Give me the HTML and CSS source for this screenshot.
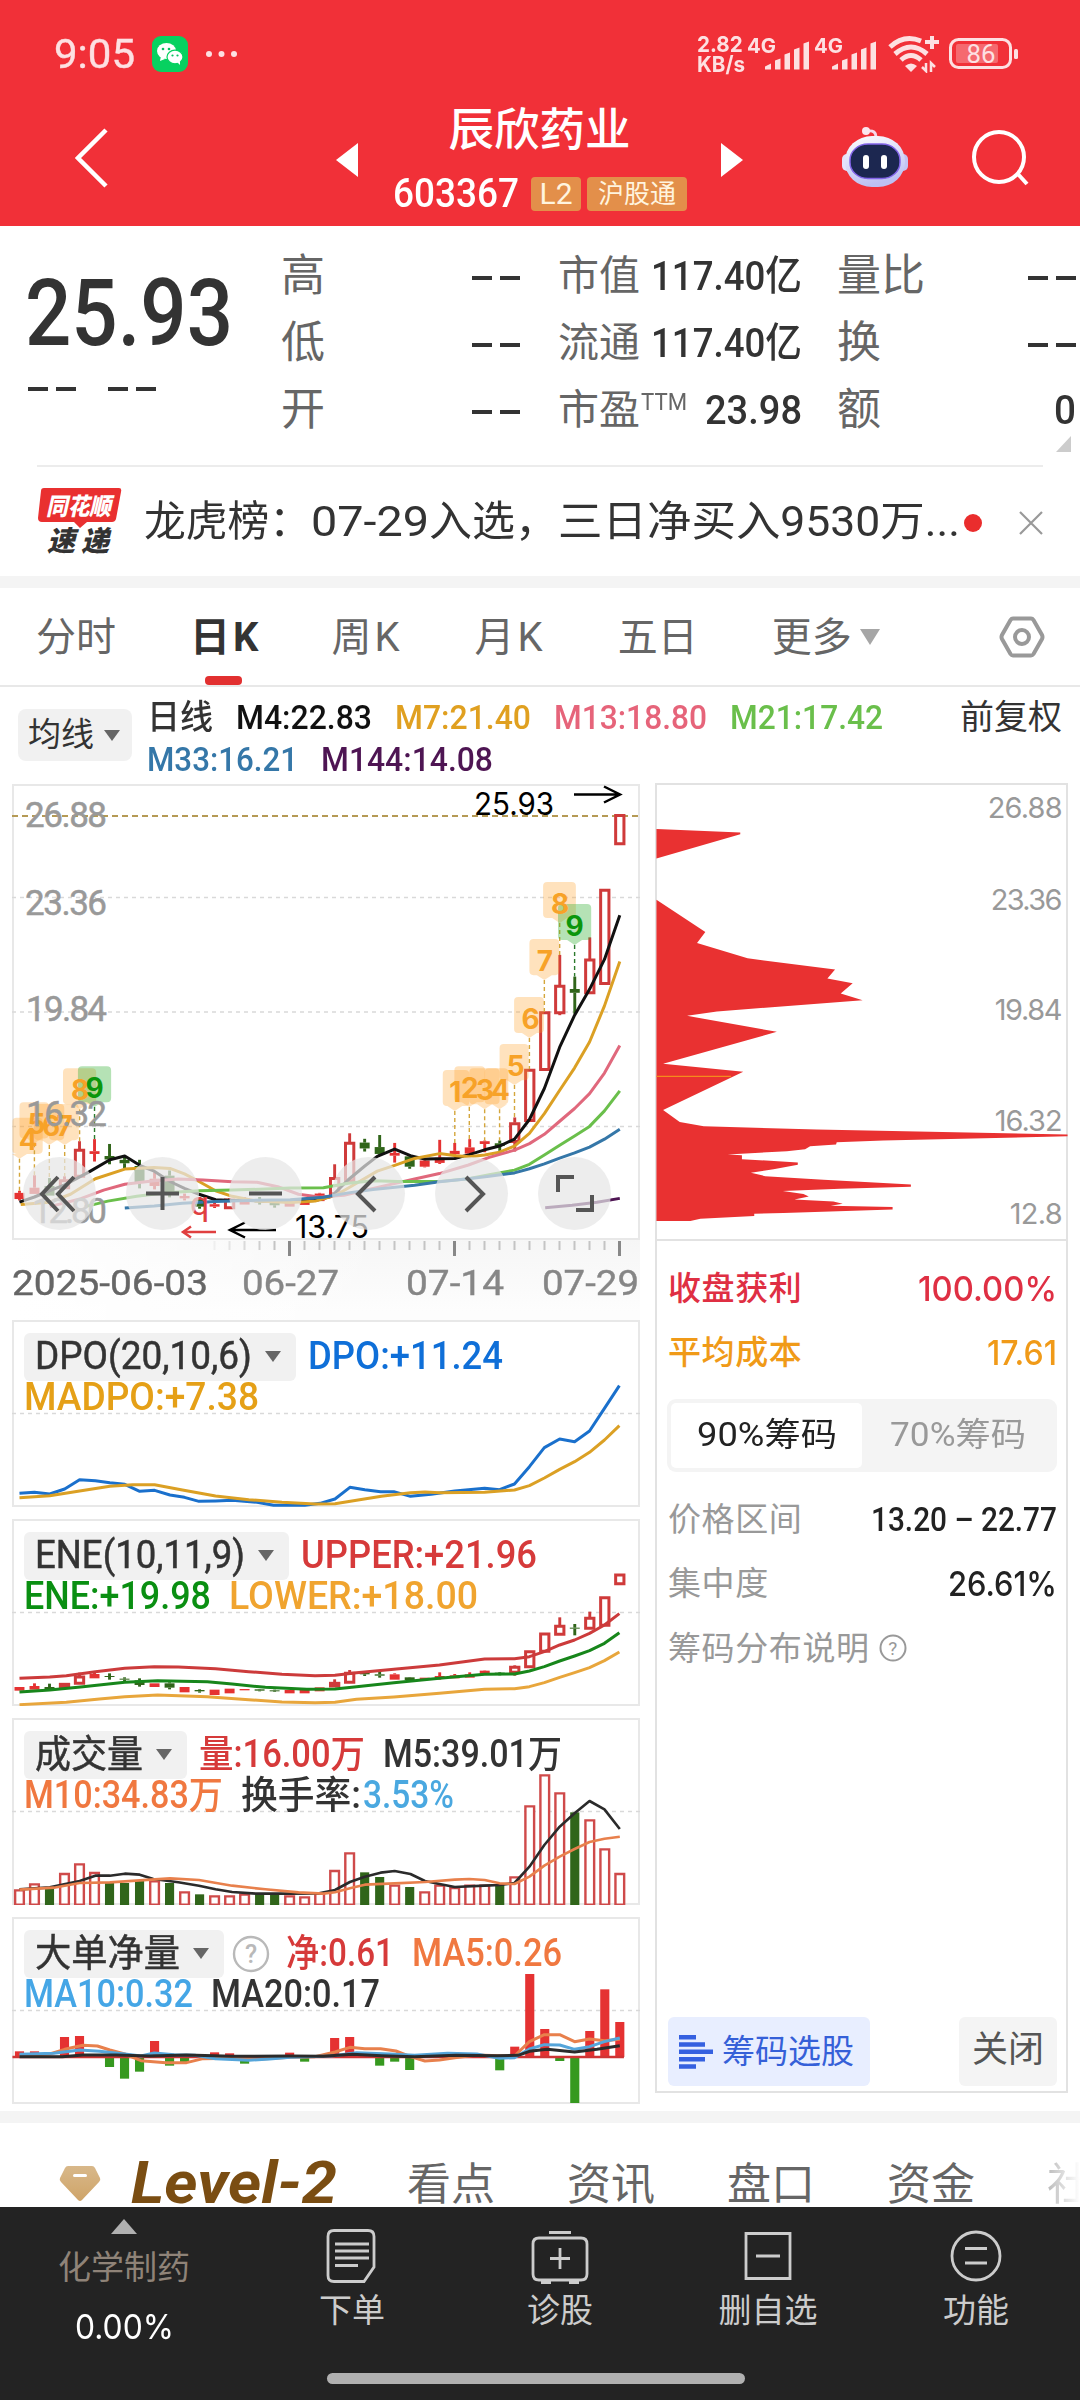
FILE: index.html
```html
<!DOCTYPE html>
<html lang="zh-CN">
<head>
<meta charset="utf-8">
<title>辰欣药业 603367</title>
<link rel="stylesheet" href="styles.css">
</head>
<body>
<header class="header">
  <div class="status">
    <span class="clock fit" data-w="81">9:05</span>
    <svg class="wechat" width="36" height="36" viewBox="0 0 36 36"><rect width="36" height="36" rx="9" fill="#07d160"/><ellipse cx="14.500" cy="15" rx="9.500" ry="8" fill="#fff"/><path d="M9 20l-1 5 5-2z" fill="#fff"/><ellipse cx="23" cy="21" rx="8" ry="6.800" fill="#fff" stroke="#07d160" stroke-width="1.200"/><path d="M25 26l3 3v-4z" fill="#fff"/><g fill="#07c160"><circle cx="11" cy="13" r="1.300"/><circle cx="17" cy="13" r="1.300"/><circle cx="20.500" cy="19.500" r="1.100"/><circle cx="25.500" cy="19.500" r="1.100"/></g></svg>
    <svg class="more-dots" width="34" height="8" viewBox="0 0 34 8" fill="#fde0e2"><circle cx="4" cy="4" r="3"/><circle cx="16.500" cy="4" r="3"/><circle cx="29" cy="4" r="3"/></svg>
    <span class="speed"><span class="fit" data-w="48">2.82</span><span class="fit" data-w="48">KB/s</span></span>
    <span class="net"><span class="fit" data-w="29">4G</span></span>
    <svg class="bars" width="46" height="30" viewBox="0 0 46 30" fill="#fde0e2"><path d="M1 28.500v-3l6-3v6zM11 28.500v-9l5.500-2v11zM20.500 28.500v-15l5.500-2v17zM30 28.500v-20l5.500-2v22zM39.500 28.500v-26l5.500-2v28z"/></svg>
    <span class="net net2"><span class="fit" data-w="29">4G</span></span>
    <svg class="bars" width="46" height="30" viewBox="0 0 46 30" fill="#fde0e2"><path d="M1 28.500v-3l6-3v6zM11 28.500v-9l5.500-2v11zM20.500 28.500v-15l5.500-2v17zM30 28.500v-20l5.500-2v22zM39.500 28.500v-26l5.500-2v28z"/></svg>
    <svg class="wifi" width="52" height="38" viewBox="0 0 52 38" fill="none" stroke="#fde0e2" stroke-width="5"><path d="M2 12Q16-1 33 6M7 19q16-14 32 0M13 25q10-9 20 0"/><path d="M17 31q6-5 12 0l-6 6z" fill="#fde0e2" stroke="none"/><path d="M37 7h14M44 1v13" stroke-width="4"/><path d="M38 28v8l-4-4M43 37v-9l4 4" stroke-width="2.500"/></svg>
    <svg class="battery" width="70" height="32" viewBox="0 0 70 32"><rect x="1.500" y="1.500" width="60" height="28" rx="8" fill="none" stroke="#fde0e2" stroke-width="3"/><rect x="7" y="6" width="42" height="19" rx="2" fill="#fff" opacity=".28"/><rect x="65" y="11" width="4" height="10" rx="1.500" fill="#fde0e2"/><text x="17.500" y="24.500" font-size="25" textLength="29" lengthAdjust="spacingAndGlyphs" fill="#fde0e2" class="sans">86</text></svg>
  </div>
  <div class="nav">
    <svg class="back" width="34" height="62" viewBox="0 0 34 62"><path d="M31 3L3 31l28 28" fill="none" stroke="#fff" stroke-width="4.500"/></svg>
    <svg class="prev" width="24" height="36" viewBox="0 0 24 36"><path d="M1 18L23 1v34z" fill="#fff"/></svg>
    <div class="title">
      <h1>辰欣药业</h1>
      <div class="code"><span class="fit" data-w="126">603367</span><span class="badge l2">L2</span><span class="badge hgt">沪股通</span></div>
    </div>
    <svg class="next" width="24" height="36" viewBox="0 0 24 36"><path d="M23 18L1 1v34z" fill="#fff"/></svg>
    <svg class="robot" width="68" height="64" viewBox="0 0 68 64"><defs><linearGradient id="shell" x1="0" y1="0" x2=".3" y2="1"><stop offset="0" stop-color="#fff"/><stop offset="1" stop-color="#bdc0f2"/></linearGradient></defs><path d="M27 5q8-1 8 6" stroke="#f6d9ea" stroke-width="3" fill="none"/><circle cx="25" cy="5" r="4" fill="#fbe6ef"/><rect x="1" y="28" width="12" height="17" rx="5" fill="#e4e2fb"/><rect x="55" y="28" width="12" height="17" rx="5" fill="#c4c3f3"/><rect x="4" y="10" width="60" height="51" rx="27" ry="25" fill="url(#shell)"/><rect x="9" y="18" width="50" height="34.500" rx="18" ry="16" fill="#1c2750" stroke="#8264e8" stroke-width="1.500"/><rect x="22" y="29" width="6" height="14" rx="3" fill="#fff"/><rect x="40" y="29" width="6" height="14" rx="3" fill="#fff"/></svg>
    <svg class="search" width="58" height="58" viewBox="0 0 58 58" fill="none" stroke="#fff" stroke-width="4"><circle cx="28" cy="28" r="25"/><path d="M46 44l10 11"/></svg>
  </div>
</header>

<section class="quote">
  <div class="last">
    <div class="price"><span class="fit" data-w="208">25.93</span></div>
    <div class="chg"><svg width="130" height="6" viewBox="0 0 130 6" fill="#333"><path d="M0 1h20v4H0zM28 1h20v4H28zM80 1h20v4H80zM108 1h20v4h-20z"/></svg></div>
  </div>
  <div class="grid">
    <span class="k">高</span><span class="v d"><i></i><i></i></span><span class="k s">市值</span><span class="v"><span class="fit" data-w="151">117.40亿</span></span><span class="k t">量比</span><span class="v d"><i></i><i></i></span>
    <span class="k">低</span><span class="v d"><i></i><i></i></span><span class="k s">流通</span><span class="v"><span class="fit" data-w="151">117.40亿</span></span><span class="k t">换</span><span class="v d"><i></i><i></i></span>
    <span class="k">开</span><span class="v d"><i></i><i></i></span><span class="k s">市盈<sup class="fit" data-w="46">TTM</sup></span><span class="v"><span class="fit" data-w="97">23.98</span></span><span class="k t">额</span><span class="v last-v"><span class="fit" data-w="22">0</span></span>
  </div>
  <svg class="corner" width="15" height="16" viewBox="0 0 15 16"><path d="M15 0v16H0z" fill="#ccc"/></svg>
</section>
<section class="news">
  <svg width="84" height="70" viewBox="0 0 84 70"><path d="M6 0h75q3 0 2 4l-5 27q-1 3-4 3H49l-7 6-6-6H4q-4 0-4-4L3 3q0-3 3-3z" fill="#e93030"/><g font-weight="900" font-style="italic" class="sans"><text x="8" y="27" font-size="24" fill="#fff" textLength="65" lengthAdjust="spacingAndGlyphs">同花顺</text><text x="9" y="63" font-size="28" fill="#333" textLength="62">速递</text></g></svg>
  <span class="headline"><span class="fit" data-w="167">龙虎榜：</span><span class="fit" data-w="118">07-29</span><span class="fit" data-w="129">入选，</span><span class="fit" data-w="402">三日净买入9530万...</span></span>
  <i class="dot"></i>
  <svg class="close" width="24" height="24" viewBox="0 0 24 24"><path d="M1 1l22 22M23 1L1 23" stroke="#999" stroke-width="2.200"/></svg>
</section>

<nav class="tabs">
  <span>分时</span><span class="on k-tab">日K</span><span class="k-tab">周K</span><span class="k-tab">月K</span><span>五日</span><span>更多</span>
  <svg class="tri" width="22" height="18" viewBox="0 0 22 18"><path d="M1 1h20L11 17z" fill="#a6a6a6"/></svg>
  <svg class="gear" width="46" height="42" viewBox="0 0 46 42" fill="none" stroke="#999" stroke-width="4"><path d="M14 2.500h18q1.500 0 2.500 1.500l8.500 15q1 2 0 4l-8.500 15q-1 1.500-2.500 1.500H14q-1.500 0-2.500-1.500L3 23q-1-2 0-4l8.500-15q1-1.500 2.500-1.500z"/><circle cx="23" cy="21" r="7"/></svg>
</nav>

<section class="ma">
  <span class="chip"><span class="fit" data-w="66">均线</span><svg width="16" height="11" viewBox="0 0 16 11"><path d="M0 0h16L8 11z" fill="#666"/></svg></span>
  <div class="ma-lines">
    <div><span class="fit" data-w="66">日线</span><span class="fit" data-w="136" style="color:#111">M4:22.83</span><span class="fit" data-w="136" style="color:#e0a020">M7:21.40</span><span class="fit" data-w="153" style="color:#e6647a">M13:18.80</span><span class="fit" data-w="153" style="color:#6abf4b">M21:17.42</span></div>
    <div><span class="fit" data-w="151" style="color:#3577a8">M33:16.21</span><span class="fit" data-w="172" style="color:#4e1553">M144:14.08</span></div>
  </div>
  <span class="adjust">前复权</span>
</section>

<main class="board">
  <div class="left">
    <div class="panel kline">
      <svg class="plot" id="kline" viewBox="12 784 628 456">
        <g class="grid-lines"><path d="M12 897.500H640M12 1012H640M12 1126.500H640"/></g>
        <path d="M12 816H640" stroke="#b59a55" stroke-width="1.800" stroke-dasharray="6 4"/>
        <g transform="translate(0 770) scale(.41458 .34435)" id="k-z">
          <g id="k-candles"></g>
          <g class="lines">
            <polyline stroke="#111" points="47,1255 83,1240 119,1222 156,1205 215,1167 265,1132 301,1121 340,1150 372,1165 410,1195 445,1215 480,1232 520,1248 560,1250 600,1250 650,1252 700,1253 760,1250 800,1238 840,1190 880,1150 910,1122 952,1101 990,1120 1025,1130 1060,1129 1097,1128 1132,1117 1169,1103 1205,1092 1241,1072 1277,1015 1313,925 1350,805 1386,712 1422,637 1458,550 1495,422"/>
            <polyline stroke="#dba024" points="50,1262 120,1255 170,1232 230,1187 301,1159 372,1154 410,1157 445,1173 480,1195 520,1222 560,1238 620,1252 700,1256 760,1252 810,1235 860,1200 910,1165 952,1148 1000,1128 1060,1114 1100,1120 1132,1123 1169,1118 1205,1110 1241,1092 1277,1055 1313,998 1350,930 1386,865 1422,790 1458,685 1495,556"/>
            <polyline stroke="#e0687c" points="120,1268 195,1245 250,1220 301,1203 372,1193 430,1188 490,1191 560,1196 620,1197 670,1210 720,1232 770,1240 830,1235 900,1215 1000,1188 1060,1172 1130,1147 1180,1125 1241,1104 1277,1085 1313,1058 1350,1020 1386,983 1422,940 1458,880 1495,800"/>
            <polyline stroke="#6abf4b" points="205,1268 260,1252 330,1238 400,1228 480,1222 560,1220 640,1217 700,1214 780,1213 840,1200 900,1193 960,1195 1060,1195 1130,1187 1180,1175 1241,1162 1277,1145 1313,1118 1350,1090 1386,1063 1422,1035 1458,990 1495,932"/>
            <polyline stroke="#3577a8" points="301,1272 372,1266 440,1258 520,1253 600,1250 700,1248 780,1241 840,1228 900,1218 1000,1206 1060,1196 1130,1187 1180,1180 1241,1170 1277,1158 1313,1144 1350,1127 1386,1112 1422,1095 1458,1072 1495,1043"/>
            <polyline stroke="#4e1553" points="1315,1271 1380,1264 1440,1255 1495,1244"/>
          </g>
          <g id="k-pins"></g>
        </g>
        <g id="k-digits" class="digits"></g>
        <g class="scale"><text x="25" y="827" textLength="82">26.88</text><text x="25" y="915" textLength="82">23.36</text><text x="26" y="1021" textLength="81">19.84</text><text x="26" y="1126" textLength="81">16.32</text><text x="32" y="1223" textLength="75">12.80</text></g>
        <g class="marks"><text x="474" y="815" textLength="80" lengthAdjust="spacingAndGlyphs">25.93</text><text x="295" y="1238" textLength="74" lengthAdjust="spacingAndGlyphs">13.75</text><text x="190" y="1215" class="q">q</text></g>
        <g fill="none" stroke="#000" stroke-width="2.500"><path d="M574 794.500h46M604 786.500l16 8-16 8M276 1230h-46M245 1222.500l-15 7.500 15 7.500"/><path stroke="#e04040" d="M216 1232h-32M191 1226.500l-8 5.500 8 5.500"/></g>
      </svg>
      <div class="tools">
        <span><svg viewBox="0 0 73 73"><path d="M35 20L19 37l16 17M51 20L35 37l16 17"/></svg></span>
        <span><svg viewBox="0 0 73 73"><path d="M20 36.500h33M36.500 20v33"/></svg></span>
        <span><svg viewBox="0 0 73 73"><path d="M20 36.500h33"/></svg></span>
        <span><svg viewBox="0 0 73 73"><path d="M43 20L26 37l17 17"/></svg></span>
        <span><svg viewBox="0 0 73 73"><path d="M31 20l17 17-17 17"/></svg></span>
        <span><svg viewBox="0 0 73 73"><path d="M36 20H20v15M54 38v15H38"/></svg></span>
      </div>
    </div>
    <div class="axis">
      <svg width="628" height="17" viewBox="0 0 628 17" id="ticks"></svg>
      <div class="dates"><span class="fit" data-w="196" style="color:#666">2025-06-03</span><span class="fit" data-w="97">06-27</span><span class="fit" data-w="98">07-14</span><span class="fit" data-w="97">07-29</span></div>
    </div>

    <div class="panel sub">
      <svg class="plot" viewBox="12 1320 628 187"><g class="grid-lines"><path d="M12 1413.500H640"/></g>
        <g transform="translate(0 1310) scale(.41458 .33333)" class="lines">
          <polyline stroke="#1a70cc" points="47,550 83,547 120,552 156,537 192,509 230,512 265,518 301,523 337,544 373,541 410,555 445,562 480,574 520,573 560,571 620,577 660,586 735,586 772,580 808,567 844,532 880,539 918,545 950,545 990,559 1040,553 1097,543 1169,535 1205,539 1241,522 1277,470 1313,413 1350,387 1386,395 1422,363 1458,295 1494,227"/>
          <polyline stroke="#dba024" points="47,563 120,557 192,543 265,529 320,524 373,524 440,540 520,558 600,569 680,577 760,582 808,581 860,571 920,559 990,548 1025,546 1060,548 1169,547 1241,540 1277,527 1313,504 1350,478 1386,455 1422,427 1458,390 1494,347"/>
        </g></svg>
      <div class="legend"><span class="chip"><span class="fit" data-w="217">DPO(20,10,6)</span><svg width="16" height="11" viewBox="0 0 16 11"><path d="M0 0h16L8 11z" fill="#666"/></svg></span><span class="fit" data-w="195" style="color:#0f6fd8">DPO:+11.24</span></div>
      <div class="legend two"><span class="fit" data-w="235" style="color:#e5a017">MADPO:+7.38</span></div>
    </div>

    <div class="panel sub">
      <svg class="plot" viewBox="12 1519 628 187"><g class="grid-lines"><path d="M12 1612.500H640"/></g>
        <g transform="translate(0 1310) scale(.41458 .33333)"><g id="e-candles"></g><g class="lines">
          <polyline stroke="#cc3b3b" points="47,1105 120,1101 160,1097 230,1085 301,1075 372,1070 430,1071 520,1076 600,1085 680,1093 760,1097 808,1096 860,1088 950,1078 1060,1065 1169,1047 1241,1046 1277,1040 1313,1025 1350,1005 1386,990 1422,970 1458,945 1494,911"/>
          <polyline stroke="#17861b" points="47,1146 120,1140 200,1130 301,1117 380,1112 500,1115 560,1122 640,1132 740,1138 808,1137 860,1130 950,1118 1060,1105 1169,1093 1241,1092 1277,1083 1313,1070 1350,1053 1386,1038 1422,1022 1458,1000 1494,968"/>
          <polyline stroke="#e8a63c" points="47,1184 160,1177 240,1167 301,1160 380,1155 500,1160 600,1169 680,1176 760,1178 808,1177 860,1168 950,1161 1060,1150 1169,1138 1241,1136 1277,1130 1313,1118 1350,1102 1386,1088 1422,1073 1458,1052 1494,1026"/>
        </g></g></svg>
      <div class="legend"><span class="chip"><span class="fit" data-w="210">ENE(10,11,9)</span><svg width="16" height="11" viewBox="0 0 16 11"><path d="M0 0h16L8 11z" fill="#666"/></svg></span><span class="fit" data-w="236" style="color:#d63a3a">UPPER:+21.96</span></div>
      <div class="legend two"><span class="fit" data-w="187" style="color:#0a8f12">ENE:+19.98</span><span class="fit" data-w="249" style="color:#f0a42f">LOWER:+18.00</span></div>
    </div>

    <div class="panel sub">
      <svg class="plot" viewBox="12 1718 628 187"><g class="grid-lines"><path d="M12 1811.500H640"/></g>
        <g transform="translate(0 1700) scale(.41458 .33333)"><g id="v-bars"></g><g class="lines thin">
          <polyline stroke="#2b2b2b" points="47,568 120,562 192,543 230,527 265,527 301,521 337,524 370,537 430,547 480,557 520,568 560,576 620,581 700,581 770,580 808,570 844,546 880,530 918,518 952,513 990,522 1025,543 1060,552 1097,561 1169,557 1205,555 1241,549 1277,500 1313,435 1350,380 1386,340 1422,303 1458,328 1495,387"/>
          <polyline stroke="#e8804c" points="47,569 130,563 192,549 265,547 337,541 410,535 480,540 560,557 640,568 720,577 780,581 808,577 844,565 880,554 952,550 1025,546 1097,539 1132,537 1169,540 1205,550 1241,552 1277,530 1313,497 1350,470 1386,447 1422,426 1458,416 1495,410"/>
        </g></g></svg>
      <div class="legend"><span class="chip"><span class="fit" data-w="108">成交量</span><svg width="16" height="11" viewBox="0 0 16 11"><path d="M0 0h16L8 11z" fill="#666"/></svg></span><span class="fit" data-w="166" style="color:#d63a3a">量:16.00万</span><span class="fit" data-w="179">M5:39.01万</span></div>
      <div class="legend two"><span class="fit" data-w="199" style="color:#f07840">M10:34.83万</span><span class="fit" data-w="120">换手率:</span><span class="fit tight" data-w="91" style="color:#4aa8e0">3.53%</span></div>
    </div>

    <div class="panel sub">
      <svg class="plot" viewBox="12 1917 628 187"><g class="grid-lines"><path d="M12 2010.500H640"/></g>
        <g transform="translate(0 1700) scale(.41458 .33333)"><g id="n-bars"></g><path d="M30 1071H1505" stroke="#cf3434" stroke-width="2.600"/><g class="lines">
          <polyline stroke="#e8804c" points="47,1067 120,1062 156,1048 200,1036 235,1038 265,1050 301,1062 340,1082 400,1088 450,1088 490,1076 560,1075 620,1078 700,1072 760,1070 808,1056 844,1042 880,1046 918,1046 955,1053 990,1070 1025,1083 1060,1080 1097,1073 1150,1065 1205,1067 1241,1068 1277,1025 1313,1004 1350,1004 1386,1025 1422,1017 1458,1022 1495,1018"/>
          <polyline stroke="#55a5da" points="47,1063 130,1060 192,1050 240,1054 301,1062 340,1068 372,1059 420,1064 470,1066 520,1076 600,1081 650,1077 700,1072 800,1068 860,1058 940,1062 1000,1066 1080,1060 1150,1062 1205,1075 1241,1073 1277,1047 1313,1034 1350,1035 1386,1048 1422,1040 1458,1025 1495,1014"/>
          <polyline stroke="#2b2b2b" points="47,1070 150,1070 200,1065 280,1065 360,1068 450,1065 560,1069 700,1068 780,1069 850,1063 920,1067 1000,1070 1100,1066 1200,1067 1250,1066 1277,1054 1320,1048 1386,1056 1440,1048 1495,1037"/>
        </g></g></svg>
      <div class="legend"><span class="chip"><span class="fit" data-w="145">大单净量</span><svg width="16" height="11" viewBox="0 0 16 11"><path d="M0 0h16L8 11z" fill="#666"/></svg></span><svg class="help" width="38" height="38" viewBox="0 0 38 38"><circle cx="19" cy="19" r="17" fill="none" stroke="#b9b9b9" stroke-width="2.400"/><text x="19" y="28" text-anchor="middle" font-size="25" fill="#b9b9b9" class="sans">?</text></svg><span class="fit" data-w="108" style="color:#d63a3a">净:0.61</span><span class="fit" data-w="150" style="color:#f07840">MA5:0.26</span></div>
      <div class="legend two"><span class="fit" data-w="169" style="color:#45a6e6">MA10:0.32</span><span class="fit" data-w="169">MA20:0.17</span></div>
    </div>
  </div>

  <aside class="chips">
    <svg class="dist" width="412" height="456" viewBox="656 784 412 456">
      <g transform="translate(640 770) scale(.33333)"><path fill="#e93131" d="M48 177L300 188V193L48 266ZM48 390L195 487 170 520 322 566 585 600 562 627 638 641 602 672 668 692 230 726 140 739 410 787 68 883 309 907 68 1022 118 1058 190 1071 530 1081 1284 1096V1101L730 1114 590 1119 588 1126 510 1131 495 1140 440 1146 262 1156 305 1158 305 1170 473 1180 473 1187 400 1200 332 1211 375 1221 550 1232 813 1246V1253L600 1259 428 1266 490 1275 506 1282 463 1291 580 1297 608 1304 572 1310 758 1314V1321L430 1332 342 1334 342 1341 180 1349 150 1356 48 1356Z"/><path d="M48 921H272" stroke="#f58a1c" stroke-width="4"/></g>
      <g class="dist-labels"><text x="988" y="818" textLength="75">26.88</text><text x="991" y="910" textLength="72">23.36</text><text x="995" y="1021" textLength="68">19.84</text><text x="995" y="1131.500" textLength="68">16.32</text><text x="1010" y="1225" textLength="53">12.8</text></g>
    </svg>
    <div class="stats">
      <div class="row red"><span>收盘获利</span><span class="num fit" data-w="139">100.00%</span></div>
      <div class="row amber"><span>平均成本</span><span class="num fit" data-w="70">17.61</span></div>
      <div class="seg"><span class="act"><span class="fit" data-w="140">90%筹码</span></span><span><span class="fit" data-w="136">70%筹码</span></span></div>
      <div class="row"><span>价格区间</span><span class="range fit" data-w="186">13.20 – 22.77</span></div>
      <div class="row"><span>集中度</span><span class="num dark fit" data-w="109">26.61%</span></div>
      <div class="row note"><span>筹码分布说明</span><svg width="28" height="28" viewBox="0 0 28 28"><circle cx="14" cy="14" r="12.500" fill="none" stroke="#999" stroke-width="2"/><text x="14" y="21" text-anchor="middle" font-size="19" fill="#999" class="sans">?</text></svg></div>
      <div class="actions"><span class="pick"><svg width="34" height="34" viewBox="0 0 34 34" fill="#3560e0"><path d="M0 0h17v4.500H0zM0 7.300h26v4.500H0zM0 14.600h34v4.500H0zM0 22h26v4.500H0zM0 29.300h17v4.500H0z"/></svg>筹码选股</span><span class="shut">关闭</span></div>
    </div>
  </aside>
</main>

<section class="bottom-tabs">
  <svg width="42" height="37" viewBox="0 0 42 37"><defs><linearGradient id="gem" x1="0" y1="0" x2="0" y2="1"><stop offset="0" stop-color="#d8b88a"/><stop offset="1" stop-color="#cfa468"/></linearGradient></defs><path d="M9 1h24q2 0 3 2l5 10q1 2-1 4L23 35q-2 2-4 0L2 17q-2-2-1-4L6 3q1-2 3-2z" fill="url(#gem)"/><rect x="14" y="9" width="14" height="3" rx="1.500" fill="#fff"/></svg>
  <span class="lv2"><span class="fit" data-w="206">Level-2</span></span><span>看点</span><span>资讯</span><span>盘口</span><span>资金</span><span class="fade">社</span>
</section>

<footer class="bar">
  <div class="sector"><svg width="26" height="15" viewBox="0 0 26 15"><path d="M13 0l13 15H0z" fill="#b0b0b0"/></svg><span class="name fit" data-w="132">化学制药</span><span class="pct"><span class="fit" data-w="99">0.00%</span></span></div>
  <div class="item"><svg width="60" height="56" viewBox="0 0 60 56"><path d="M12 2.500h34q6 0 6 6V39L42 53.500H12q-6 0-6-6v-39q0-6 6-6zM13 16h34M13 23h34M13 30h34M13 37.500h23"/></svg>下单</div>
  <div class="item"><svg width="60" height="56" viewBox="0 0 60 56"><path d="M19 4.500h22M9 10h42q6 0 6 6v30q0 6-6 6H9q-6 0-6-6V16q0-6 6-6zM30 20v21M20 30.500h20M11 54.500h10M39 54.500h10"/></svg>诊股</div>
  <div class="item"><svg width="60" height="56" viewBox="0 0 60 56"><path d="M8 5.500h44v45H8zM18 28h24"/></svg>删自选</div>
  <div class="item"><svg width="60" height="56" viewBox="0 0 60 56"><circle cx="30" cy="28" r="24"/><path d="M19 20.500h22M19 35h22"/></svg>功能</div>
  <i class="home"></i>
</footer>
<script src="app.js"></script>
</body>
</html>
```
FILE: styles.css
```css
* { box-sizing: border-box; }
body { margin: 0; width: 1080px; height: 2400px; overflow: hidden; background: #fff; color: #333; font-family: Roboto, "Noto Sans CJK SC", sans-serif; position: relative; }
svg { display: block; flex: none; }
i { font-style: normal; }
.sans { font-family: Roboto, "Noto Sans CJK SC", sans-serif; }
.fit { display: inline-block; white-space: nowrap; text-align: left; transform-origin: 0 50%; flex: none; }

/* header */
.header { height: 226px; background: #f13038; color: #fff; }
.status { height: 90px; padding: 18px 0 0 54px; display: flex; align-items: center; color: #fde0e2; }
.clock { font-size: 41px; -webkit-text-stroke: .4px; }
.wechat { margin-left: 17px; }
.more-dots { margin-left: 17px; }
.speed { margin-left: 458px; display: flex; flex-direction: column; font: 700 22px/20px Inter, sans-serif; }
.net { margin: -17px 0 0 2px; width: 17px; font: 700 20px/20px Inter, sans-serif; white-space: nowrap; }
.net2 { margin-left: 4px; }
.bars { margin-top: 3px; }
.wifi { margin-left: 11px; }
.battery { margin-left: 9px; }
.nav { height: 136px; display: flex; align-items: center; position: relative; }
.back { margin-left: 75px; }
.prev { margin-left: 226px; margin-top: 4px; }
.title { width: 292px; margin-left: 36px; display: flex; flex-direction: column; align-items: center; height: 136px; padding-top: 9px; }
.title h1 { margin: 0 3px 0 0; font-size: 45.500px; line-height: 64px; height: 64px; font-weight: 500; }
.code { display: flex; align-items: center; font-size: 40px; font-weight: 500; line-height: 62px; height: 62px; width: 296px; }
.badge { height: 34px; line-height: 34px; border-radius: 4px; background: #e38f4a; font-size: 26px; font-weight: 400; text-align: center; color: #fff4df; }
.badge.l2 { width: 50px; margin-left: 12px; font-size: 30px; }
.badge.hgt { width: 100px; margin-left: 6px; }
.next { margin-left: 33px; margin-top: 3px; }
.robot { margin-left: 97px; }
.search { margin-left: 62px; }

/* quote */
.quote { height: 241px; margin: 0 0 0 27px; padding-top: 17px; display: flex; position: relative; }
.last { width: 256px; }
.price { font-size: 93px; font-weight: 500; line-height: 106px; padding-top: 18px; margin-left: -2px; }
.chg { padding: 19px 0 0 1px; }
.grid { display: grid; grid-template-columns: 90px 149px 173px 112px 152px 119px; grid-auto-rows: 67px; line-height: 67px; width: 797px; margin-left: -2px; }
.k { font-size: 44px; color: #666; white-space: nowrap; }
.k.s { font-size: 41px; padding-left: 38px; }
.k.t { padding-left: 32px; }
.k sup { font-size: 24px; line-height: 20px; vertical-align: 14px; margin-left: 1px; }
.v { font-size: 41px; font-weight: 500; padding-right: 3px; display: flex; justify-content: flex-end; align-items: center; line-height: 67px; }
.v.last-v { padding-right: 0; }
.v.d { gap: 8px; padding-right: 0; padding-top: 2px; }
.v.d i { width: 20px; height: 4px; background: #333; }
.corner { position: absolute; right: 9px; bottom: 15px; }
.quote::after { content: ""; position: absolute; left: 10px; right: 37px; bottom: 0; height: 2px; background: #ececec; }
.news { height: 109px; padding: 3px 37px 0 38px; display: flex; align-items: center; }
.headline { display: flex; font-size: 42px; line-height: 60px; margin: -2px 0 0 22px; }
.dot { width: 18px; height: 18px; border-radius: 50%; background: #ea2d2d; margin-left: 4px; }
.close { margin-left: 37px; }

/* period tabs */
.tabs { border-top: 12px solid #f4f4f4; height: 111px; border-bottom: 2px solid #e8e8e8; padding-left: 36px; display: flex; align-items: center; font-size: 40px; color: #666; }
.tabs span { position: relative; height: 97px; line-height: 99px; margin-right: 74px; white-space: nowrap; }
.tabs .on { color: #333; font-weight: 700; margin-right: 70px; }
.tabs .k-tab { letter-spacing: 3px; }
.tabs span:nth-child(3), .tabs span:nth-child(4) { margin-right: 72px; }
.tabs .on::after { content: ""; position: absolute; left: 15px; bottom: 0; width: 37px; height: 9px; border-radius: 4px; background: #e23030; }
.tabs span:nth-child(6) { margin-right: 7px; }
.gear { margin-left: 118px; }

/* moving averages */
.ma { height: 97px; display: flex; padding-left: 18px; }
.chip { display: inline-flex; align-items: center; background: #f1f1f1; border-radius: 8px; }
.ma .chip { width: 114px; height: 52px; margin-top: 22px; padding-left: 10px; gap: 10px; font-size: 33px; line-height: 52px; }
.ma-lines { margin-left: 15px; width: 813px; padding-top: 9px; font-weight: 500; font-size: 34px; }
.ma-lines div { display: flex; gap: 23px; line-height: 42px; height: 42px; }
.adjust { font-size: 34px; line-height: 52px; padding-top: 4px; white-space: nowrap; }

/* charts */
.board { display: flex; gap: 15px; padding-left: 12px; height: 1327px; }
.left { width: 628px; }
.panel { position: relative; border: 2px solid #e8e8e8; }
.plot { position: absolute; left: -2px; top: -2px; width: 628px; }
.plot path, .plot rect, .plot polyline { vector-effect: non-scaling-stroke; }
.kline { height: 456px; }
.grid-lines path { stroke: #d9d9d9; stroke-width: 1.300; stroke-dasharray: 4 4; }
.lines { fill: none; stroke-width: 3; stroke-linejoin: round; }
.lines.thin { stroke-width: 2.600; }
.scale { font-size: 35px; fill: #999; stroke: #999; stroke-width: .500px; }
.marks { font-family: Inter, sans-serif; font-size: 31px; fill: #000; }
.marks .q { font-family: Roboto, sans-serif; fill: #e04040; font-size: 34px; }
.digits { font-family: Inter, sans-serif; font-weight: 700; font-size: 28px; text-anchor: middle; }
.tools { position: absolute; left: 9px; top: 371px; display: flex; gap: 30px; }
.tools span { width: 73px; height: 73px; border-radius: 50%; background: rgba(230, 230, 230, .72); }
.tools svg path { fill: none; stroke: #555; stroke-width: 4; }
.axis { height: 80px; background: linear-gradient(90deg, #fff, rgba(255,255,255,0) 60%), linear-gradient(#f6f6f6, #fdfdfd 90%); }
.dates { display: flex; font-size: 35px; color: #868686; line-height: 40px; padding-top: 7px; margin-right: -1px; -webkit-text-stroke: .4px; }
.dates span:nth-child(2) { margin-left: 34px; }
.dates span:nth-child(3) { margin-left: 67px; }
.dates span:nth-child(4) { margin-left: 38px; }
.sub { height: 187px; margin-bottom: 12px; padding: 10px 0 0 10px; }
.legend { position: relative; display: flex; align-items: center; height: 49px; font-size: 38px; font-weight: 500; line-height: 51px; }
.legend .chip { height: 48px; padding: 0 15px 0 11px; gap: 13px; margin-right: 12px; border-radius: 6px; font-weight: 400; -webkit-text-stroke: .5px #333; }
.legend > .fit + .fit { margin-left: 18px; }
.legend > .fit.tight { margin-left: 2px; }
.legend.two { height: 31px; line-height: 32px; }
.help { margin: 0 16px 0 -4px; }

/* chip distribution */
.chips { width: 413px; height: 1310px; border: 2px solid #e2e2e2; margin-top: -1px; }
.dist { margin: -1px 0 0 -1px; border-bottom: 2px solid #e2e2e2; height: 457px; }
.dist-labels { font-family: Inter, sans-serif; font-size: 29px; fill: #999; }
.stats { padding: 16px 9px 0 10px; font-size: 33px; color: #999; }
.row { display: flex; justify-content: space-between; height: 64px; line-height: 63px; white-space: nowrap; letter-spacing: .6px; }
.row > span:first-child { padding-left: 1px; }
.row.red { color: #df2f43; font-weight: 500; }
.row.amber { color: #f09a18; font-weight: 500; }
.num { font-family: Inter, sans-serif; font-weight: 500; font-size: 34px; letter-spacing: 0; }
.num.dark { color: #222; }
.range { font-size: 33px; font-weight: 500; color: #222; letter-spacing: 0; }
.seg { display: flex; height: 73px; margin: 14px 0 16px; padding: 4px; background: #f4f4f4; border-radius: 9px; line-height: 63px; }
.seg > span { flex: 1; text-align: center; }
.seg .act { background: #fff; color: #222; border-radius: 5px; }
.row.note { justify-content: flex-start; align-items: center; gap: 9px; }
.actions { display: flex; justify-content: space-between; margin-top: 337px; padding-left: 1px; height: 69px; line-height: 67px; }
.pick { display: flex; align-items: center; gap: 9px; width: 202px; padding-left: 11px; background: #e8eeff; color: #3560d8; border-radius: 6px; white-space: nowrap; }
.shut { width: 98px; text-align: center; background: #f4f4f4; color: #555; font-size: 36px; border-radius: 6px; }

.bottom-tabs { border-top: 12px solid #f4f4f4; height: 96px; padding: 0 0 0 59px; display: flex; align-items: flex-start; overflow: hidden; font-size: 44px; line-height: 60px; color: #666; }
.bottom-tabs > svg { margin-top: 42px; }
.bottom-tabs > span { margin: 32px 72px 0 0; white-space: nowrap; }
.bottom-tabs .lv2 { margin: 30px 70px 0 30px; font-weight: 700; font-style: italic; font-size: 59px; color: #7a4d12; }
.bottom-tabs .fade { margin-right: 0; background: linear-gradient(90deg, #bbb, #fff 75%); -webkit-background-clip: text; color: transparent; }

.bar { position: relative; height: 193px; background: #232323; display: flex; color: #ccc; font-size: 33px; }
.sector { width: 248px; display: flex; flex-direction: column; align-items: center; padding-top: 12px; }
.sector .name { color: #8f8378; line-height: 40px; margin-top: 14px; }
.sector .pct { color: #fff; font-family: Inter, sans-serif; font-size: 34px; line-height: 40px; margin-top: 19px; }
.item { width: 208px; display: flex; flex-direction: column; align-items: center; padding-top: 21px; line-height: 54px; }
.item svg { fill: none; stroke: #ccc; stroke-width: 2.800; }
.home { position: absolute; left: 327px; top: 166px; width: 418px; height: 11px; border-radius: 6px; background: #b0b0b0; }
```
FILE: app.js
```js
// Condense or widen single-line labels to their column width.
document.querySelectorAll('.fit').forEach(function (el) {
  var target = +el.dataset.w, natural = el.getBoundingClientRect().width;
  el.style.width = target + 'px';
  el.style.transform = 'scaleX(' + target / natural + ')';
});

var RED = '#cf3a3a', SOLID = '#e53232', GREEN = '#30651a';
function X(i) { return 47 + 36.2 * i; }
function rect(x, y, w, h, attrs) {
  return '<rect x="' + x + '" y="' + y + '" width="' + w + '" height="' + h + '" ' + attrs + '/>';
}
// kind: h hollow red, r solid red, g green; [kind, high, top, bottom, low]
function candles(id, rows) {
  document.getElementById(id).innerHTML = rows.map(function (c, i) {
    var x = X(i), col = c[0] === 'g' ? GREEN : c[0] === 'r' ? SOLID : RED, s = '';
    if (c[1] < c[2]) s += rect(x - 3.5, c[1], 7, c[2] - c[1], 'fill="' + col + '"');
    if (c[4] > c[3]) s += rect(x - 3.5, c[3], 7, c[4] - c[3], 'fill="' + col + '"');
    s += c[0] === 'h'
      ? rect(x - 10, c[2] + 3, 20, Math.max(c[3] - c[2] - 6, 4), 'fill="#fff" stroke="' + col + '" stroke-width="3"')
      : rect(x - 12, c[2], 24, c[3] - c[2], 'fill="' + col + '"');
    return s;
  }).join('');
}
candles('k-candles', [
  ['r',1222,1228,1246,1250],['r',1177,1213,1231,1231],['g',1185,1208,1236,1236],['h',1180,1190,1216,1216],
  ['h',1078,1101,1183,1183],['r',1072,1107,1115,1137],['g',1086,1121,1131,1145],['g',1122,1132,1142,1156],
  ['g',1132,1150,1198,1215],['r',1168,1187,1208,1218],['g',1163,1178,1226,1241],['r',1230,1237,1244,1250],
  ['g',1240,1245,1268,1274],['r',1255,1261,1268,1272],['h',1243,1246,1274,1274],['r',1240,1244,1262,1262],
  ['g',1240,1250,1256,1262],['g',1250,1256,1264,1271],['r',1255,1256,1268,1268],['r',1250,1251,1263,1263],
  ['r',1228,1230,1252,1252],['h',1145,1183,1233,1233],['h',1055,1081,1196,1196],['g',1071,1082,1099,1108],
  ['g',1060,1095,1115,1120],['r',1083,1112,1120,1140],['g',1120,1122,1152,1158],['r',1130,1134,1152,1154],
  ['r',1074,1126,1141,1144],['r',1083,1106,1116,1118],['r',1072,1096,1114,1118],['r',1076,1078,1086,1110],
  ['g',1076,1084,1092,1106],['h',1009,1024,1082,1108],['h',869,869,1021,1021],['h',702,702,873,873],
  ['h',537,625,708,712],['g',600,636,647,708],['h',486,549,650,650],['h',346,346,623,623],['h',129,129,217,217]
]);
candles('e-candles', [
  ['r',1131,1131,1142,1142],['r',1120,1128,1139,1139],['g',1121,1131,1137,1140],['h',1120,1120,1134,1134],
  ['h',1088,1098,1123,1123],['r',1087,1092,1105,1105],['g',1090,1098,1101,1109],['g',1102,1106,1109,1113],
  ['g',1105,1111,1125,1130],['r',1120,1120,1131,1131],['g',1117,1120,1133,1138],['r',1131,1131,1147,1147],
  ['g',1138,1140,1144,1148],['r',1139,1139,1155,1155],['r',1136,1136,1150,1150],['r',1137,1137,1141,1141],
  ['g',1137,1138,1142,1144],['g',1139,1141,1144,1146],['r',1140,1140,1150,1150],['r',1139,1139,1150,1150],
  ['r',1132,1132,1144,1144],['h',1108,1117,1131,1131],['h',1080,1087,1120,1120],['g',1087,1089,1093,1098],
  ['g',1083,1093,1097,1103],['r',1090,1093,1109,1109],['g',1101,1102,1110,1110],['r',1103,1103,1109,1109],
  ['r',1087,1098,1107,1109],['r',1092,1096,1105,1105],['r',1087,1093,1103,1103],['r',1081,1082,1092,1092],
  ['g',1086,1088,1094,1096],['h',1066,1069,1090,1097],['h',1022,1022,1073,1073],['h',969,969,1027,1027],
  ['h',922,946,976,976],['g',942,953,956,976],['h',905,922,958,958],['h',860,860,949,949],['h',792,792,824,824]
]);

// Number pins: [box left, box right, top, pointer x, digit x, digit, stem end, green?]
var pins = [
  [30,103,1010,47,68,4,1225],[47,118,965,83,88,5,1177],[82,155,970,119,123,6,1185],[118,190,970,156,156,7,1180],
  [152,232,866,192,193,8,1078],[188,268,860,228,228,9,1072,1],
  [1068,1132,871,1097,1098,1,1083],[1096,1170,860,1132,1133,2,1072],[1132,1205,866,1169,1170,3,1076],[1169,1226,866,1205,1207,4,1076],
  [1205,1275,796,1241,1244,5,1009],[1240,1312,659,1277,1280,6,869],[1277,1349,491,1313,1314,7,702],
  [1310,1389,325,1350,1351,8,537],[1346,1426,389,1386,1386,9,600,1]
];
document.getElementById('k-pins').innerHTML = pins.map(function (p) {
  var b = p[2] + 105, fill = p[7] ? 'rgba(50,175,50,.36)' : 'rgba(255,165,50,.32)', ink = p[7] ? '#2c7a2c' : '#d4a63c';
  return '<path d="M' + (p[0] + 10) + ' ' + p[2] + 'H' + (p[1] - 10) + 'q10 0 10 12V' + (b - 12) + 'q0 12-10 12H' + (p[3] + 18) +
    'L' + p[3] + ' ' + (b + 14) + 'L' + (p[3] - 18) + ' ' + b + 'H' + (p[0] + 10) + 'q-10 0-10-12V' + (p[2] + 12) + 'q0-12 10-12z" fill="' + fill + '"/>' +
    '<path d="M' + p[3] + ' ' + (b + 14) + 'V' + p[6] + '" stroke="' + ink + '" stroke-width="1.4" stroke-dasharray="4 3"/>';
}).join('');
document.getElementById('k-digits').innerHTML = pins.map(function (p) {
  return '<text x="' + (p[4] / 2.412).toFixed(1) + '" y="' + (770 + (p[2] + 92) / 2.904).toFixed(1) + '" fill="' + (p[7] ? '#0b960b' : '#f7a228') + '">' + p[5] + '</text>';
}).join('');

// Volume bars, top edge per day; green days listed separately.
var vol = [570,552,566,521,492,518,549,549,543,543,549,576,583,588,588,583,582,583,588,591,580,512,459,517,531,556,561,576,556,563,556,556,552,531,318,225,279,337,360,447,521];
var down = [2,6,7,8,10,12,16,17,23,24,26,32,37];
document.getElementById('v-bars').innerHTML = vol.map(function (t, i) {
  return down.indexOf(i) >= 0
    ? rect(X(i) - 11, t, 22, 617 - t, 'fill="' + GREEN + '"')
    : rect(X(i) - 10.5, t + 1, 21, 613 - t, 'fill="#fff" stroke="#cf4a4a" stroke-width="2.4"');
}).join('');

// Net large-order flow around the zero line at 1071.
var net = {0:1054,1:1054,3:1011,4:1008,6:1101,7:1136,8:1115,9:1023,10:1097,11:1088,13:1057,14:1060,15:1091,18:1058,19:1085,21:1014,22:1011,24:1097,25:1085,26:1110,32:1111,33:1040,34:822,35:987,36:1083,37:1209,38:993,39:868,40:966};
document.getElementById('n-bars').innerHTML = Object.keys(net).map(function (i) {
  var v = net[i];
  return rect(X(+i) - 11, Math.min(v, 1071), 22, Math.abs(v - 1071), 'fill="' + (v > 1071 ? '#36991f' : '#e53232') + '"');
}).join('');

var ticks = '';
for (var i = 13; i <= 40; i++) {
  var major = i === 18 || i === 29 || i === 40;
  ticks += rect(7.5 + 15 * i - (major ? 1.5 : 1), 1, major ? 3 : 2, major ? 15 : 9, 'fill="' + (major ? '#888' : '#c4c4c4') + '" opacity="' + Math.min(1, (i - 12) / 5) + '"');
}
document.getElementById('ticks').innerHTML = ticks;
```
